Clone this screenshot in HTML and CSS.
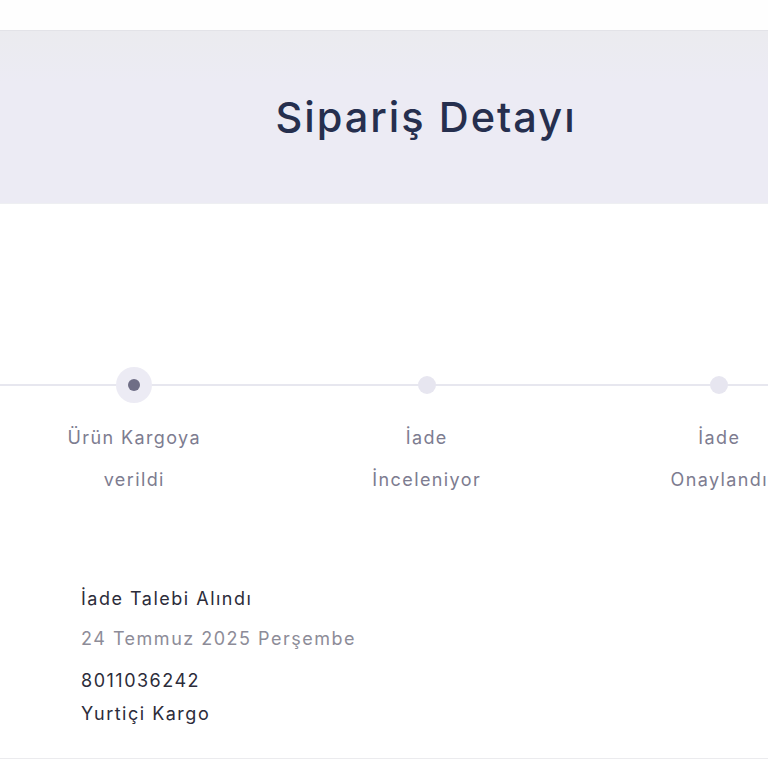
FILE: index.html
```html
<!DOCTYPE html>
<html lang="tr">
<head>
<meta charset="utf-8">
<link rel="stylesheet" href="styles.css">
</head>
<body>
<div class="top-space"></div>
<header class="page-head">
  <h1 class="page-title">Sipariş Detayı</h1>
</header>
<section class="tracker">
  <div class="steps">
    <div class="step step-active">
      <div class="dot-wrap"><span class="dot"></span></div>
      <div class="label">Ürün Kargoya<br>verildi</div>
    </div>
    <div class="step">
      <div class="dot-wrap"><span class="dot"></span></div>
      <div class="label">İade<br>İnceleniyor</div>
    </div>
    <div class="step">
      <div class="dot-wrap"><span class="dot"></span></div>
      <div class="label">İade<br>Onaylandı</div>
    </div>
  </div>
</section>
<section class="details">
  <div class="d-title">İade Talebi Alındı</div>
  <div class="d-date">24 Temmuz 2025 Perşembe</div>
  <div class="d-track">8011036242</div>
  <div class="d-cargo">Yurtiçi Kargo</div>
</section>
<div class="bottom-rule"></div>
</body>
</html>
```
FILE: styles.css
```css
html, body {
  margin: 0;
  padding: 0;
  background: #ffffff;
  overflow: hidden;
}
body {
  font-family: Inter, "Noto Sans", sans-serif;
  width: 768px;
  height: 768px;
}
.top-space {
  height: 30px;
  background: #fefefe;
}
.page-head {
  height: 172px;
  border-top: 1px solid #e3e3e8;
  background: linear-gradient(#ebebef, #ecebf4 30%, #ecebf4);
  width: 852px;
  display: flex;
  align-items: center;
  justify-content: center;
  box-shadow: 0 1px 0 #eeeff2;
}
.page-title {
  margin: 0;
  font-size: 41.5px;
  font-weight: 500;
  color: #262f4e;
  letter-spacing: 2px;
}
.tracker {
  padding-top: 164px;
}
.steps {
  position: relative;
  display: grid;
  grid-template-columns: repeat(3, 292.5px);
  margin-left: -12px;
  width: 900px;
}
.steps::before {
  content: "";
  position: absolute;
  left: 0;
  right: 0;
  top: 17px;
  height: 2px;
  background: #e7e7ef;
}
.step {
  display: flex;
  flex-direction: column;
  align-items: center;
  position: relative;
}
.dot-wrap {
  width: 36px;
  height: 36px;
  display: flex;
  align-items: center;
  justify-content: center;
  border-radius: 50%;
}
.dot {
  width: 18px;
  height: 18px;
  border-radius: 50%;
  background: #e7e6f0;
}
.step-active .dot-wrap {
  background: #ecebf4;
}
.step-active .dot {
  width: 12px;
  height: 12px;
  background: #6f6e86;
}
.label {
  margin-top: 14px;
  font-size: 18px;
  line-height: 42px;
  letter-spacing: 1.4px;
  color: #7d7c90;
  text-align: center;
  white-space: nowrap;
}
.details {
  padding: 86px 0 0 81px;
  font-size: 18px;
  line-height: 24px;
  letter-spacing: 1.5px;
}
.d-title {
  color: #2c2c3a;
}
.d-date {
  margin-top: 16px;
  color: #8d8c98;
}
.d-track {
  margin-top: 18px;
  color: #2c2c3a;
}
.d-cargo {
  margin-top: 9px;
  color: #2c2c3a;
}
.bottom-rule {
  margin-top: 32px;
  height: 1px;
  background: #ebebee;
}
```
